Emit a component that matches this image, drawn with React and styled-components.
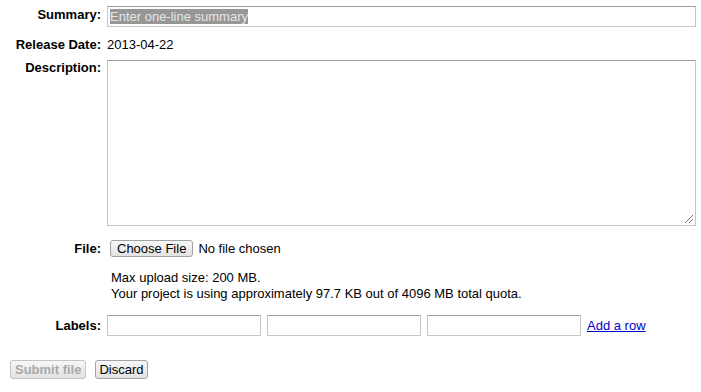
import React from "react";
import styled, { createGlobalStyle } from "styled-components";

const Global = createGlobalStyle`
  html, body { margin: 0; padding: 0; background: #fff; }
  body { font-family: "Liberation Sans", Arial, sans-serif; font-size: 13px; color: #000; }
`;

const Form = styled.div`
  width: 701px;
  padding: 6px 5px 0 0;
  box-sizing: border-box;
  display: flex;
  flex-direction: column;
`;

const Row = styled.div`
  display: flex;
  align-items: flex-start;
  gap: 6px;
  margin-top: ${(p) => p.$mt || 0}px;
`;

const Label = styled.div`
  width: 101px;
  flex: none;
  text-align: right;
  font-weight: bold;
  line-height: 15px;
  padding-top: ${(p) => p.$pt || 0}px;
`;

const Field = styled.div`
  flex: 1;
  min-width: 0;
  line-height: 15px;
  padding-top: ${(p) => p.$pt || 0}px;
`;

const TextBox = styled.div`
  box-sizing: border-box;
  height: ${(p) => p.$h || 21}px;
  ${(p) => (p.$w ? `width: ${p.$w}; flex: none;` : "flex: 1; min-width: 0;")}
  border: 1px solid #c6c6c6;
  border-top-color: #9c9c9c;
  background: #fff;
  padding: 2px 2px;
  line-height: 15px;
  position: relative;
`;

const Selected = styled.span`
  background: #969696;
  color: #e6e6e6;
  display: inline-block;
  line-height: 15px;
`;

const Grip = styled.svg`
  position: absolute;
  right: 1px;
  bottom: 1px;
`;

const FileLine = styled.div`
  display: flex;
  align-items: center;
  gap: 5px;
`;

const Button = styled.div`
  box-sizing: border-box;
  height: ${(p) => p.$h || 17}px;
  padding: 0 ${(p) => p.$px ?? 6}px;
  display: inline-flex;
  align-items: center;
  border: 1px solid ${(p) => (p.$disabled ? "#c4c4c4" : "#a3a3a3")};
  border-radius: 3px;
  background: linear-gradient(#f7f7f7, #e2e2e2);
  color: ${(p) => (p.$disabled ? "#a9a9a9" : "#000")};
  font-weight: ${(p) => (p.$bold ? "bold" : "normal")};
  font-size: 13px;
  white-space: nowrap;
`;

const FileButton = styled(Button)`
  margin-left: 3px;
`;

const Note = styled.div`
  margin-top: 13px;
  padding-left: 4px;
  line-height: 16px;
`;

const LabelsRow = styled.div`
  display: flex;
  align-items: center;
  gap: 6px;
`;

const Link = styled.a`
  color: #0000cc;
  text-decoration: underline;
  cursor: pointer;
`;

const Actions = styled.div`
  display: flex;
  gap: 9px;
  padding-left: 10px;
  margin-top: 24px;
`;

export default function App() {
  return (
    <>
      <Global />
      <Form>
        <Row>
          <Label $pt={1}>Summary:</Label>
          <TextBox>
            <Selected>Enter one-line summary</Selected>
          </TextBox>
        </Row>
        <Row $mt={10}>
          <Label>Release Date:</Label>
          <Field>2013-04-22</Field>
        </Row>
        <Row $mt={8}>
          <Label>Description:</Label>
          <TextBox $h={166}>
            <Grip width="11" height="11" viewBox="0 0 11 11">
              <g stroke="#777" strokeWidth="1">
                <line x1="10" y1="2" x2="2" y2="10" />
                <line x1="10" y1="6" x2="6" y2="10" />
              </g>
            </Grip>
          </TextBox>
        </Row>
        <Row $mt={14}>
          <Label $pt={1}>File:</Label>
          <Field>
            <FileLine>
              <FileButton>Choose File</FileButton>
              <span>No file chosen</span>
            </FileLine>
            <Note>
              <div>Max upload size: 200 MB.</div>
              <div>Your project is using approximately 97.7 KB out of 4096 MB total quota.</div>
            </Note>
          </Field>
        </Row>
        <Row $mt={13}>
          <Label $pt={3}>Labels:</Label>
          <LabelsRow>
            <TextBox $w="154px" />
            <TextBox $w="154px" />
            <TextBox $w="154px" />
            <Link>Add a row</Link>
          </LabelsRow>
        </Row>
        <Actions>
          <Button $disabled $bold $h={19} $px={4}>Submit file</Button>
          <Button $h={19} $px={3}>Discard</Button>
        </Actions>
      </Form>
    </>
  );
}
